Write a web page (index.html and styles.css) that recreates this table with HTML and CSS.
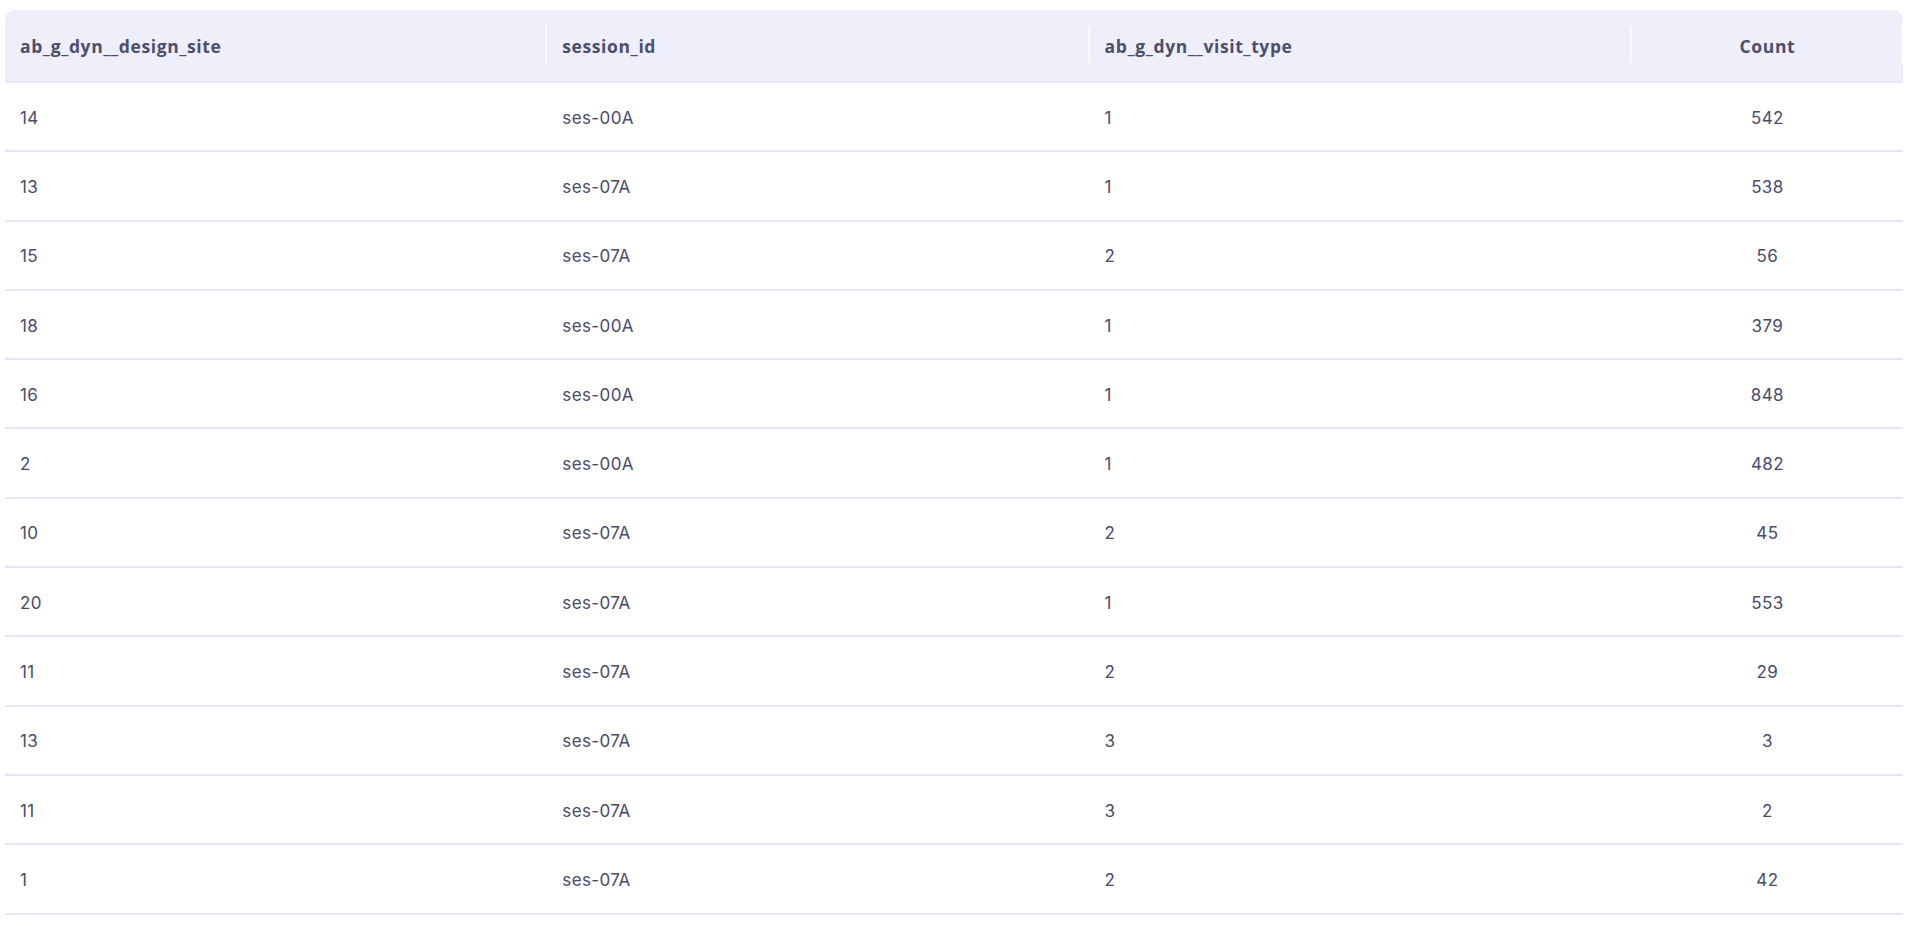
FILE: index.html
```html
<!DOCTYPE html>
<html lang="en">
<head>
<meta charset="utf-8">
<title>Table</title>
<link rel="stylesheet" href="styles.css">
</head>
<body>
<div class="page">
  <div class="table">
    <div class="row head">
      <div class="cell">ab_g_dyn__design_site<span class="sep"></span></div>
      <div class="cell">session_id<span class="sep"></span></div>
      <div class="cell">ab_g_dyn__visit_type<span class="sep"></span></div>
      <div class="cell num">Count<span class="sep"></span></div>
    </div>
    <div class="row"><div class="cell">14</div><div class="cell">ses-00A</div><div class="cell">1</div><div class="cell num">542</div></div>
    <div class="row"><div class="cell">13</div><div class="cell">ses-07A</div><div class="cell">1</div><div class="cell num">538</div></div>
    <div class="row"><div class="cell">15</div><div class="cell">ses-07A</div><div class="cell">2</div><div class="cell num">56</div></div>
    <div class="row"><div class="cell">18</div><div class="cell">ses-00A</div><div class="cell">1</div><div class="cell num">379</div></div>
    <div class="row"><div class="cell">16</div><div class="cell">ses-00A</div><div class="cell">1</div><div class="cell num">848</div></div>
    <div class="row"><div class="cell">2</div><div class="cell">ses-00A</div><div class="cell">1</div><div class="cell num">482</div></div>
    <div class="row"><div class="cell">10</div><div class="cell">ses-07A</div><div class="cell">2</div><div class="cell num">45</div></div>
    <div class="row"><div class="cell">20</div><div class="cell">ses-07A</div><div class="cell">1</div><div class="cell num">553</div></div>
    <div class="row"><div class="cell">11</div><div class="cell">ses-07A</div><div class="cell">2</div><div class="cell num">29</div></div>
    <div class="row"><div class="cell">13</div><div class="cell">ses-07A</div><div class="cell">3</div><div class="cell num">3</div></div>
    <div class="row"><div class="cell">11</div><div class="cell">ses-07A</div><div class="cell">3</div><div class="cell num">2</div></div>
    <div class="row"><div class="cell">1</div><div class="cell">ses-07A</div><div class="cell">2</div><div class="cell num">42</div></div>
  </div>
</div>
</body>
</html>
```

FILE: styles.css
```css
html, body {
  margin: 0;
  padding: 0;
  background: #ffffff;
}
body {
  font-family: "Inter", "Lato", sans-serif;
  color: #4a4b68;
  font-size: 16px;
}
.page {
  padding: 10px 5px;
}
.table {
  display: flex;
  flex-direction: column;
}
.row {
  display: grid;
  grid-template-columns: 2fr 2fr 2fr 1fr;
  height: 69.3px;
  box-sizing: border-box;
  border-bottom: 2px solid #e4e5f7;
}
.row.head {
  height: 73px;
  background: #eeeffb;
  border-radius: 10px 10px 0 0;
  border-bottom: 2px solid #e6e7f7;
  font-family: "Open Sans", "Noto Sans", sans-serif;
  font-weight: 700;
  color: #4d4e6b;
}
.cell {
  position: relative;
  display: flex;
  align-items: center;
  padding: 2px 15px 0;
  font-size: 17px;
  font-weight: 400;
  letter-spacing: 0.4px;
}
.head .cell {
  font-size: 17.5px;
  font-weight: 700;
  letter-spacing: 0.6px;
  padding-top: 0;
}
.cell.num {
  justify-content: center;
}
.sep {
  position: absolute;
  right: 0;
  top: 16px;
  width: 2px;
  height: 37px;
  background: #fafaff;
}
```
